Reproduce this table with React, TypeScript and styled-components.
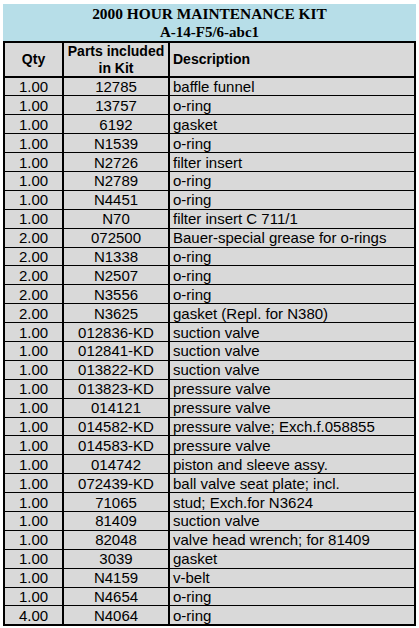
import React from "react";
import styled, { createGlobalStyle } from "styled-components";

const Global = createGlobalStyle`
  html, body { margin: 0; padding: 0; background: #ffffff; }
  body { font-family: "Liberation Sans", Arial, sans-serif; }
`;

const Sheet = styled.div`
  margin: 4px 0 0 3px;
  width: 413px;
`;

const TitleBand = styled.div`
  background: #b7dee8;
  height: 37px;
  padding-top: 1px;
  box-sizing: border-box;
  text-align: center;
  font-family: "Liberation Serif", "Times New Roman", serif;
  font-weight: bold;
  color: #000;
`;

const TitleLine = styled.div<{ $size: number }>`
  font-size: ${(p) => p.$size}px;
  line-height: 18px;
  height: 18px;
`;

const Table = styled.table`
  width: 413px;
  border-collapse: collapse;
  table-layout: fixed;
  border: 2px solid #000;
  background: #d9d9d9;
  color: #000;
`;

const HeadCell = styled.th<{ $align?: string }>`
  border: 2px solid #000;
  height: 31px;
  padding: 0 3px;
  font-size: 14px;
  line-height: 16.5px;
  font-weight: bold;
  text-align: ${(p) => p.$align || "center"};
`;

const Row = styled.tr`
  height: 18.9px;
`;

const Cell = styled.td<{ $align?: string }>`
  border: 2px solid #000;
  border-top-width: 1.5px;
  border-bottom-width: 1.5px;
  padding: 0 3px;
  font-size: 15px;
  line-height: 15px;
  white-space: nowrap;
  overflow: hidden;
  text-align: ${(p) => p.$align || "center"};
`;

const rows: [string, string, string][] = [
  ["1.00", "12785", "baffle funnel"],
  ["1.00", "13757", "o-ring"],
  ["1.00", "6192", "gasket"],
  ["1.00", "N1539", "o-ring"],
  ["1.00", "N2726", "filter insert"],
  ["1.00", "N2789", "o-ring"],
  ["1.00", "N4451", "o-ring"],
  ["1.00", "N70", "filter insert C 711/1"],
  ["2.00", "072500", "Bauer-special grease for o-rings"],
  ["2.00", "N1338", "o-ring"],
  ["2.00", "N2507", "o-ring"],
  ["2.00", "N3556", "o-ring"],
  ["2.00", "N3625", "gasket (Repl. for N380)"],
  ["1.00", "012836-KD", "suction valve"],
  ["1.00", "012841-KD", "suction valve"],
  ["1.00", "013822-KD", "suction valve"],
  ["1.00", "013823-KD", "pressure valve"],
  ["1.00", "014121", "pressure valve"],
  ["1.00", "014582-KD", "pressure valve; Exch.f.058855"],
  ["1.00", "014583-KD", "pressure valve"],
  ["1.00", "014742", "piston and sleeve assy."],
  ["1.00", "072439-KD", "ball valve seat plate; incl."],
  ["1.00", "71065", "stud; Exch.for N3624"],
  ["1.00", "81409", "suction valve"],
  ["1.00", "82048", "valve head wrench; for 81409"],
  ["1.00", "3039", "gasket"],
  ["1.00", "N4159", "v-belt"],
  ["1.00", "N4654", "o-ring"],
  ["4.00", "N4064", "o-ring"],
];

export default function App() {
  return (
    <Sheet>
      <Global />
      <TitleBand>
        <TitleLine $size={15.4}>2000 HOUR MAINTENANCE KIT</TitleLine>
        <TitleLine $size={15}>A-14-F5/6-abc1</TitleLine>
      </TitleBand>
      <Table>
        <colgroup>
          <col style={{ width: 59 }} />
          <col style={{ width: 106 }} />
          <col />
        </colgroup>
        <thead>
          <tr>
            <HeadCell>Qty</HeadCell>
            <HeadCell>
              Parts included
              <br />
              in Kit
            </HeadCell>
            <HeadCell $align="left">Description</HeadCell>
          </tr>
        </thead>
        <tbody>
          {rows.map(([q, p, d], i) => (
            <Row key={i}>
              <Cell>{q}</Cell>
              <Cell>{p}</Cell>
              <Cell $align="left">{d}</Cell>
            </Row>
          ))}
        </tbody>
      </Table>
    </Sheet>
  );
}
